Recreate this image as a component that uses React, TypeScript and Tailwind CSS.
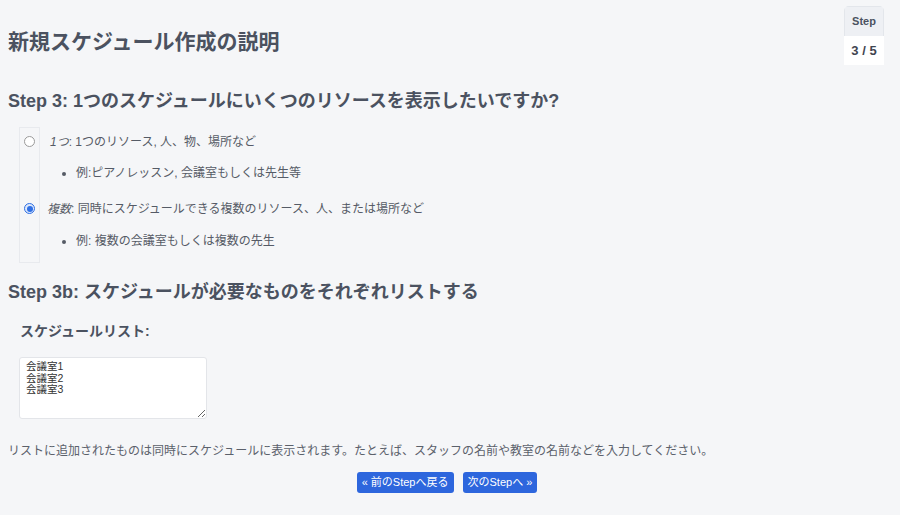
export default function App() {
  const font = { fontFamily: '"Liberation Sans", "Noto Sans CJK JP", sans-serif' };

  return (
    <div className="relative min-h-[515px] bg-[#f5f6f8] px-2 pt-[28px] text-[#4b5260]" style={font}>
      {/* step indicator */}
      <div className="absolute right-[16px] top-[6px] w-[40px] overflow-hidden rounded-t-[5px] text-center">
        <div className="flex h-[30px] items-center justify-center border border-b-0 border-[#e3e6eb] bg-[#eef0f4] text-[11px] font-bold text-[#4b5260]">
          Step
        </div>
        <div className="flex h-[29px] items-center justify-center bg-white text-[13px] font-bold text-[#3f4550]">
          3 / 5
        </div>
      </div>

      <h1 className="text-[21px] font-bold leading-[28px]">新規スケジュール作成の説明</h1>

      <h2 className="mt-[33px] text-[18px] font-bold leading-[24px]">
        Step 3: 1つのスケジュールにいくつのリソースを表示したいですか?
      </h2>

      <div className="ml-[11px] mt-[14px] flex">
        <div className="flex h-[136px] w-[21px] flex-col items-center border border-[#e8eaee] pt-[8px]">
          <span className="h-[11px] w-[11px] rounded-full border border-[#9a9a9a] bg-white" />
          <span className="mt-[56px] flex h-[11px] w-[11px] items-center justify-center rounded-full border border-[#2f6fe4] bg-[#dce8fb]">
            <span className="h-[6px] w-[6px] rounded-full bg-[#2f6fe4]" />
          </span>
        </div>
        <div className="pl-[7px] pt-[7px] text-[12px] leading-[16px] text-[#555b66]">
          <p>
            <i className="pl-[3px]">1つ</i>: 1つのリソース, 人、物、場所など
          </p>
          <ul className="ml-[29px] mt-[15px] list-disc">
            <li>例:ピアノレッスン, 会議室もしくは先生等</li>
          </ul>
          <p className="mt-[20px]">
            <i>複数</i>: 同時にスケジュールできる複数のリソース、人、または場所など
          </p>
          <ul className="ml-[29px] mt-[16px] list-disc">
            <li>例: 複数の会議室もしくは複数の先生</li>
          </ul>
        </div>
      </div>

      <h2 className="mt-[17px] text-[18px] font-bold leading-[24px]">
        Step 3b: スケジュールが必要なものをそれぞれリストする
      </h2>

      <div className="ml-[12px] mt-[17px] text-[14px] font-bold leading-[20px]">スケジュールリスト:</div>

      <textarea
        className="ml-[11px] mt-[16px] block h-[62px] w-[188px] rounded-[3px] border border-[#e3e5e9] bg-white px-[6px] py-[3px] text-[10.5px] leading-[11.5px] text-[#333] outline-none"
        defaultValue={"会議室1\n会議室2\n会議室3"}
        style={font}
      />

      <p className="mt-[24px] text-[12px] leading-[16px] text-[#5b616b]">
        リストに追加されたものは同時にスケジュールに表示されます。たとえば、スタッフの名前や教室の名前などを入力してください。
      </p>

      <div className="mt-[13px] flex justify-center gap-[9px] pr-[6px]">
        <button className="h-[21px] rounded-[3px] bg-[#2d66dd] px-[5px] text-[11px] text-white">« 前のStepへ戻る</button>
        <button className="h-[21px] rounded-[3px] bg-[#2d66dd] px-[5px] text-[11px] text-white">次のStepへ »</button>
      </div>
    </div>
  );
}
